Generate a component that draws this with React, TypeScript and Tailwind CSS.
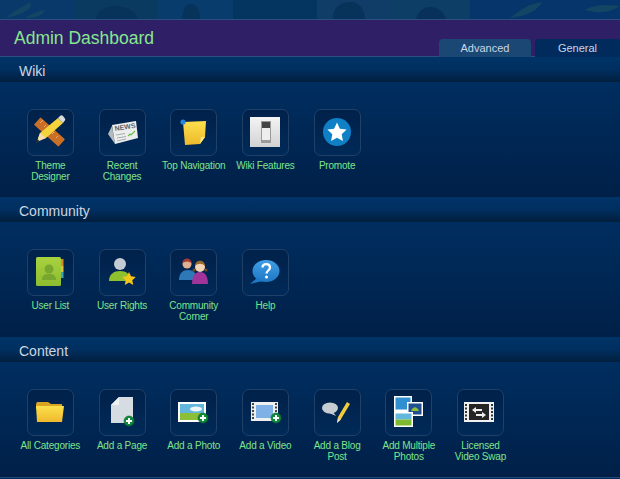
import type { ReactNode } from 'react'

function Plus({ x, y }: { x: number; y: number }) {
  return (
    <g>
      <circle cx={x} cy={y} r="5" fill="#0d8a3a" stroke="#0b6a2e" strokeWidth="0.6" />
      <path d={`M${x - 3} ${y}h6M${x} ${y - 3}v6`} stroke="#fff" strokeWidth="2" />
    </g>
  )
}

function Grad({ id, from, to }: { id: string; from: string; to: string }) {
  return (
    <defs>
      <linearGradient id={id} x1="0" y1="0" x2="0" y2="1">
        <stop offset="0" stopColor={from} />
        <stop offset="1" stopColor={to} />
      </linearGradient>
    </defs>
  )
}

const icons: Record<string, ReactNode> = {
  theme: (
    <>
      <rect x="6" y="18" width="33" height="10" rx="1" transform="rotate(42 22.500 23)" fill="#c96f26" />
      <path d="M13 14l3-3M17 18l2-2M21 22l2-2M25 25l2-2M29 29l2-2" stroke="#eca868" strokeWidth="1" />
      <path d="M10 32l3-8L31 9l5 5-17 15z" fill="#f5d33c" />
      <path d="M13 24l6 5-9 4z" fill="#f3dcb0" />
      <path d="M9 34l1.300-4 2.500 2.300z" fill="#333" />
      <path d="M31 9l2-2c1-1 2-1 3 0l1.500 2c1 1 1 2 0 3l-1.500 2z" fill="#d9d9d9" />
    </>
  ),
  news: (
    <>
      <path d="M9 25l4-8 3 18z" fill="#b4b9bd" />
      <path d="M13 16l24-4 2 17-23 6z" fill="#eceeee" />
      <text x="16" y="22" fontSize="7" fontWeight="700" fill="#5f6468" transform="rotate(-9 16 22)" fontFamily="Liberation Sans, sans-serif">NEWS</text>
      <path d="M17 26l9-1.500M18 29l9-1.500M18 32l9-2" stroke="#a8acb0" strokeWidth="1" />
      <path d="M29 27l2-2 1 1 4-4" stroke="#6cc04a" strokeWidth="1.200" fill="none" />
    </>
  ),
  nav: (
    <>
      <Grad id="note" from="#fbe04c" to="#eeb92c" />
      <path d="M13 13l23-1-1 16-5 7-15 1z" fill="url(#note)" />
      <path d="M30 35l1-7 4 0z" fill="#fbe98c" />
      <circle cx="13" cy="13" r="2.600" fill="#2a86d8" />
    </>
  ),
  features: (
    <>
      <Grad id="plate" from="#f4f4f4" to="#d2d2d2" />
      <rect x="8" y="8" width="30" height="30" fill="url(#plate)" />
      <rect x="19" y="12" width="10" height="22" fill="#9a9a9a" />
      <rect x="20" y="13" width="8" height="6" fill="#444" />
      <rect x="20" y="19" width="8" height="12" fill="#ededed" />
    </>
  ),
  promote: (
    <>
      <circle cx="23" cy="23" r="14" fill="#0f7fc6" />
      <path d="M23 13.500l2.900 6.200 6.700.9-4.900 4.700 1.200 6.700-5.900-3.200-5.900 3.200 1.200-6.700-4.900-4.700 6.700-.9z" fill="#fff" />
    </>
  ),
  userlist: (
    <>
      <Grad id="book" from="#a9d23f" to="#8dbd30" />
      <rect x="9" y="8" width="25" height="29" rx="1.500" fill="url(#book)" />
      <rect x="34" y="10" width="2.500" height="7" fill="#d98a2b" />
      <rect x="34" y="17" width="2.500" height="6" fill="#e0c13a" />
      <rect x="34" y="23" width="2.500" height="6" fill="#3aa7b8" />
      <circle cx="22" cy="20" r="4.500" fill="#78a62e" />
      <path d="M15 31c0-5 3-6 7-6s7 1 7 6z" fill="#78a62e" />
    </>
  ),
  rights: (
    <>
      <circle cx="21" cy="15" r="6" fill="#c3ccd4" />
      <path d="M10 32c0-7 5-10 11-10s11 3 11 10z" fill="#8fc12f" />
      <path d="M30 23l2 4.300 4.800.6-3.500 3.300.9 4.700-4.200-2.300-4.200 2.300.9-4.700-3.500-3.300 4.800-.6z" fill="#f5c518" />
    </>
  ),
  corner: (
    <>
      <path d="M9 31c0-7 4-10 9-10s9 3 9 10z" fill="#2f78b8" />
      <circle cx="17" cy="15" r="4.500" fill="#e0b090" />
      <path d="M12.500 14c0-6 9-6 9 0-3-2-6-2-9 0z" fill="#a83a32" />
      <path d="M22 35c0-8 3-12 8-12s8 4 8 12z" fill="#a0349a" />
      <circle cx="30" cy="18" r="5" fill="#f2d4b4" />
      <path d="M25 17c0-7 10-7 10 0-3-3-7-3-10 0z" fill="#9a6a2c" />
      <circle cx="24" cy="21" r="1.500" fill="#7a4f1e" />
      <circle cx="36" cy="21" r="1.500" fill="#7a4f1e" />
    </>
  ),
  help: (
    <>
      <Grad id="bubble" from="#3f9fe6" to="#1f78c4" />
      <ellipse cx="24" cy="22" rx="13.500" ry="11" fill="url(#bubble)" />
      <path d="M15 29l-7 6 13-3z" fill="#1f78c4" />
      <path d="M20.500 18.500c0-4.500 7.500-4.500 7.500 0 0 3-3.500 3-3.500 6" stroke="#fff" strokeWidth="2.300" fill="none" />
      <circle cx="24.500" cy="28" r="1.500" fill="#fff" />
    </>
  ),
  folder: (
    <>
      <Grad id="folder" from="#fbe04c" to="#eeb92c" />
      <path d="M9 15l1-2h11l3 2h11v5H9z" fill="#d9a520" />
      <path d="M9 17h28l-2 16H10z" fill="url(#folder)" />
    </>
  ),
  page: (
    <>
      <path d="M20 8h14v26H12V16z" fill="#d5dce2" />
      <path d="M12 16l8-8v8z" fill="#eef1f4" />
      <Plus x={30} y={32} />
    </>
  ),
  photo: (
    <>
      <rect x="8" y="13" width="28" height="20" fill="#fff" />
      <rect x="10" y="15" width="24" height="9" fill="#64b7dc" />
      <rect x="10" y="24" width="24" height="7" fill="#8cbf38" />
      <ellipse cx="26" cy="20" rx="6" ry="2.500" fill="#eef6fb" />
      <Plus x={33} y={29} />
    </>
  ),
  video: (
    <>
      <rect x="9" y="13" width="27" height="19" fill="#eef0f0" />
      <path d="M11 14v17M34 14v17" stroke="#444" strokeWidth="2" strokeDasharray="2 1.500" />
      <rect x="14" y="16" width="17" height="13" fill="#7fb0e6" />
      <Plus x={34} y={29} />
    </>
  ),
  blog: (
    <>
      <ellipse cx="16" cy="19" rx="8" ry="5.500" fill="#c6cdd3" />
      <path d="M19 23l3 4-7-3z" fill="#c6cdd3" />
      <path d="M23 34l1-6 9-15 3 2-9 15z" fill="#f2cc3a" />
      <path d="M23 34l1-5 3 1.500z" fill="#e8d9b8" />
    </>
  ),
  multiple: (
    <>
      <rect x="9" y="7" width="18" height="16" fill="#fff" />
      <rect x="10.500" y="8.500" width="15" height="12" fill="#2f8fd0" />
      <rect x="22" y="13" width="16" height="14" fill="#fff" />
      <rect x="23.500" y="14.500" width="13" height="11" fill="#1f4f8f" />
      <path d="M26 22c2-5 6-5 8 0z" fill="#8cbf38" />
      <rect x="9" y="23" width="19" height="15" fill="#fff" />
      <rect x="10.500" y="24.500" width="16" height="6" fill="#64b7dc" />
      <rect x="10.500" y="30.500" width="16" height="6" fill="#7dba30" />
    </>
  ),
  swap: (
    <>
      <rect x="7" y="13" width="30" height="20" fill="#f0f0f0" />
      <rect x="12" y="15" width="20" height="16" fill="#252525" />
      <path d="M9 15v16M35 15v16" stroke="#333" strokeWidth="2" strokeDasharray="2 1.500" />
      <path d="M25 20h-6v-2l-4 3 4 3v-2h6zM19 25h6v-2l4 3-4 3v-2h-6z" fill="#eee" />
    </>
  ),
}

type Item = { icon: string; label: string }

const sections: { title: string; items: Item[] }[] = [
  {
    title: 'Wiki',
    items: [
      { icon: 'theme', label: 'Theme\nDesigner' },
      { icon: 'news', label: 'Recent\nChanges' },
      { icon: 'nav', label: 'Top Navigation' },
      { icon: 'features', label: 'Wiki Features' },
      { icon: 'promote', label: 'Promote' },
    ],
  },
  {
    title: 'Community',
    items: [
      { icon: 'userlist', label: 'User List' },
      { icon: 'rights', label: 'User Rights' },
      { icon: 'corner', label: 'Community\nCorner' },
      { icon: 'help', label: 'Help' },
    ],
  },
  {
    title: 'Content',
    items: [
      { icon: 'folder', label: 'All Categories' },
      { icon: 'page', label: 'Add a Page' },
      { icon: 'photo', label: 'Add a Photo' },
      { icon: 'video', label: 'Add a Video' },
      { icon: 'blog', label: 'Add a Blog\nPost' },
      { icon: 'multiple', label: 'Add Multiple\nPhotos' },
      { icon: 'swap', label: 'Licensed\nVideo Swap' },
    ],
  },
]

function Tile({ icon, label }: Item) {
  return (
    <div className="flex w-[71.7px] flex-col items-center">
      <div className="h-[47px] w-[47px] rounded-[7px] border border-[#1f4168] bg-gradient-to-b from-[#00214a] to-[#012a58]">
        <svg viewBox="1 1 45 45" width="45" height="45">{icons[icon]}</svg>
      </div>
      <div className="mt-[4px] text-center text-[10px] leading-[11px] tracking-[-0.2px] whitespace-pre-line text-[#7fe58c]">{label}</div>
    </div>
  )
}

export default function App() {
  return (
    <div className="h-[479px] w-[620px] overflow-hidden bg-[#002a59] font-['Liberation_Sans',Arial,sans-serif]">
      {/* faded wallpaper strip */}
      <svg className="block" width="620" height="19" viewBox="0 0 620 19">
        <rect width="620" height="19" fill="#09386a" />
        <rect x="75" width="82" height="19" fill="#0b3a60" />
        <rect x="157" width="76" height="19" fill="#073c6c" />
        <rect x="233" width="84" height="19" fill="#033560" />
        <rect x="317" width="74" height="19" fill="#103c68" />
        <rect x="391" width="79" height="19" fill="#0d3e66" />
        <rect x="470" width="150" height="19" fill="#05356a" />
        <path d="M6 18c8-8 16-10 24-16 4 6-6 12-24 16zM26 18c4-4 10-6 18-8 0 4-6 8-18 8zM510 18c10-8 18-14 32-16-4 8-14 14-32 16zM585 10c8-5 20-6 35-4-8 6-22 8-35 4z" fill="#124664" />
        <path d="M96 19c0-16 36-18 42 0z" fill="#07325a" />
        <path d="M182 19c2-6 1-14 8-15 8 0 10 8 10 15z" fill="#07325a" />
        <path d="M333 19c0-14 10-17 18-17 8 0 14 8 14 17z" fill="#07325a" />
        <path d="M416 19c2-8 8-12 14-12s14 4 16 12z" fill="#07305a" />
      </svg>
      <div className="relative h-[38px] border-y border-y-[#2d4f80] bg-[#2e1f66] pl-[14px]">
        <h1 className="pt-[8px] text-[17.5px] leading-[21px] font-normal text-[#86e88e]">Admin Dashboard</h1>
        <div className="absolute right-0 bottom-[-1px] flex gap-[4px] text-[11px] text-[#c9d6e6]">
          <div className="flex h-[18px] w-[92px] items-center justify-center rounded-t-[4px] bg-[#1b4775]">Advanced</div>
          <div className="flex h-[18px] w-[85px] items-center justify-center rounded-t-[4px] bg-[#012b5c]">General</div>
        </div>
      </div>
      {sections.map(s => (
        <section key={s.title}>
          <div className="h-[25px] bg-gradient-to-b from-[#003468] via-[#002f60] to-[#011f3e] pl-[19px] text-[14px] leading-[29px] text-[#ccd6e0]">{s.title}</div>
          <div className="flex h-[115px] bg-gradient-to-b from-[#002e60] to-[#002048] pt-[27px] pl-[14.5px]">
            {s.items.map(it => <Tile key={it.label} {...it} />)}
          </div>
        </section>
      ))}
      <div className="border-t border-t-[#1f4a78]" />
    </div>
  )
}
